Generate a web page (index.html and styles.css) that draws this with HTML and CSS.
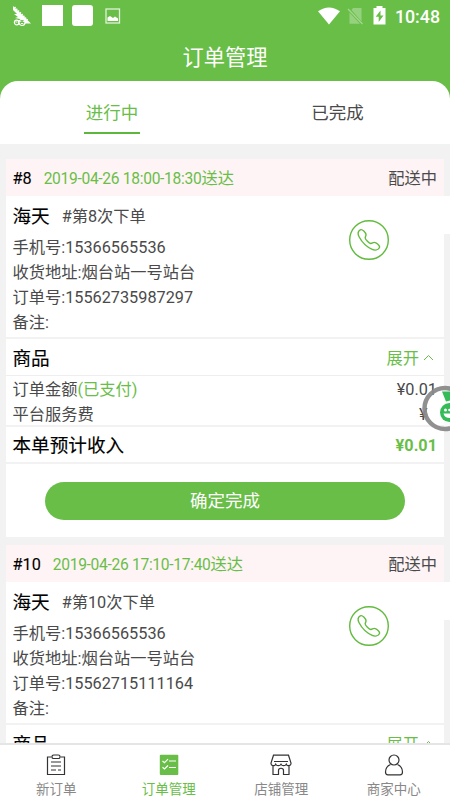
FILE: index.html
```html
<!DOCTYPE html>
<html lang="zh-CN">
<head>
<meta charset="utf-8">
<title>订单管理</title>
<link rel="stylesheet" href="styles.css">
</head>
<body>
<div class="app">
  <header class="top">
    <div class="status">
      <div class="status-left">
        <svg class="bird" width="20" height="22" viewBox="0 0 20 22"><path d="M1 1L19 18.500H12L8 14L3 13L6 12L2 9L5 9L1 5Z" fill="#fff"/><path d="M2.500 2l13 13" stroke="#fff" stroke-width="1.500" stroke-dasharray="1.500 1"/><circle cx="4.700" cy="17.500" r="2.300" fill="#69be48" stroke="#fff" stroke-width="1.200"/><circle cx="10" cy="17.500" r="3" fill="#69be48" stroke="#fff" stroke-width="1.200"/><path d="M3.500 17h2M8.300 16.500h1M10.800 16.500h1M8.800 18.500h2.500" stroke="#fff"/></svg>
        <i class="sq"></i><i class="sq round"></i>
        <svg class="pic" width="16" height="16" viewBox="0 0 16 16"><rect x="1" y="1" width="13.500" height="14" fill="none" stroke="#dff2d8" stroke-width="1.300"/><path d="M2.500 13V9.500L5 8l3 2 2-1.500 3 2V13z" fill="#fff"/></svg>
      </div>
      <div class="status-right">
        <svg width="22" height="18" viewBox="0 0 22 18"><path d="M0 4.200Q11-3.400 22 4.200L11 17.500Z" fill="#fff"/></svg>
        <svg class="sim" width="17" height="18" viewBox="0 0 17 18"><path d="M6 1h8.500v13.500L4.500 3zM2.500 5.500L13 16.800H2.500z" fill="#96d17f"/><path d="M1 2l14.500 15" stroke="#a5d892" stroke-width="1.200"/></svg>
        <svg class="bat" width="13" height="19" viewBox="0 0 13 19"><path d="M3.500 0h6v2H12.500v16.500H.5V2h3z" fill="#fff"/><path d="M7.500 4.500L2.700 10.700h3V16l4.800-6.400h-3z" fill="#69be48"/></svg>
        <span class="clock">10:48</span>
      </div>
    </div>
    <h1>订单管理</h1>
  </header>
  <nav class="tabs">
    <div class="tab on"><span>进行中</span></div>
    <div class="tab"><span>已完成</span></div>
  </nav>
  <main class="list">
    <section class="card">
      <div class="head"><b class="no">#8</b><span class="time">2019-04-26 18:00-18:30<em>送达</em></span><span class="state">配送中</span></div>
      <div class="info">
        <div class="who"><b>海天</b><span>#第8次下单</span></div>
        <p>手机号:15366565536</p><p>收货地址:烟台站一号站台</p><p>订单号:15562735987297</p><p>备注:</p>
        <svg class="call" width="42" height="42" viewBox="0 0 42 42"><circle cx="21" cy="21" r="19.300"/><path d="M12.200 10.900C10 12.200 9.700 15.200 11.200 18c3 5.600 7.500 10 13 12.300 2.800 1.200 6 .7 7.200-1.600 1-1.900-3.300-5.300-5.200-5.300-1.500 0-2 1.200-3.500 1.100-1.700-.3-5.200-3.700-5.500-5.500-.2-1.500 1-1.900.8-3.400C17.800 13.600 14.300 9.500 12.200 10.900Z"/></svg>
      </div>
      <div class="goods"><b>商品</b><span>展开<svg class="chev" width="11" height="7" viewBox="0 0 11 7"><path d="M1 6l4.500-4.500L10 6"/></svg></span></div>
      <div class="fees">
        <div class="fee"><span>订单金额<em>(已支付)</em></span><span>¥0.01</span></div>
        <div class="fee"><span>平台服务费</span><span class="blank">¥</span></div>
      </div>
      <div class="income"><b>本单预计收入</b><strong>¥0.01</strong></div>
      <div class="action"><button>确定完成</button></div>
    </section>
    <section class="card">
      <div class="head"><b class="no">#10</b><span class="time">2019-04-26 17:10-17:40<em>送达</em></span><span class="state">配送中</span></div>
      <div class="info">
        <div class="who"><b>海天</b><span>#第10次下单</span></div>
        <p>手机号:15366565536</p><p>收货地址:烟台站一号站台</p><p>订单号:15562715111164</p><p>备注:</p>
        <svg class="call" width="42" height="42" viewBox="0 0 42 42"><circle cx="21" cy="21" r="19.300"/><path d="M12.200 10.900C10 12.200 9.700 15.200 11.200 18c3 5.600 7.500 10 13 12.300 2.800 1.200 6 .7 7.200-1.600 1-1.900-3.300-5.300-5.200-5.300-1.500 0-2 1.200-3.500 1.100-1.700-.3-5.200-3.700-5.500-5.500-.2-1.500 1-1.900.8-3.400C17.800 13.600 14.300 9.500 12.200 10.900Z"/></svg>
      </div>
      <div class="goods"><b>商品</b><span>展开<svg class="chev" width="11" height="7" viewBox="0 0 11 7"><path d="M1 6l4.500-4.500L10 6"/></svg></span></div>
    </section>
  </main>
  <footer class="bar">
    <div class="item"><svg width="22" height="22" viewBox="0 0 22 22"><path d="M6.500 3H2.500v17.500h17V3h-4"/><rect x="7" y="1" width="8" height="3.500" rx="1.600"/><path d="M6 8h10M6 12h10M6 16h5M13 16h3"/></svg><span>新订单</span></div>
    <div class="item on"><svg width="22" height="22" viewBox="0 0 22 22"><rect class="fill" x="1.800" y=".8" width="18.500" height="20.200" rx="1"/><path class="light" d="M4.500 7l2 1.700L10 5.200M11 7h7M4.500 13.300l2 1.700 3.500-3.500M11 13.500h7"/></svg><span>订单管理</span></div>
    <div class="item"><svg width="24" height="22" viewBox="0 0 24 22"><path d="M4.500 1.200h15L22 9c.3 3-3.500 3.600-4.700 1.200-1 2-4.200 2-5.300 0-1.100 2-4.300 2-5.300 0C5.500 12.600 1.700 12 2 9zM5 7.500h14M4 12v8.500h5.500v-4c0-3 5-3 5 0v4H20V12"/></svg><span>店铺管理</span></div>
    <div class="item"><svg width="22" height="22" viewBox="0 0 22 22"><circle cx="11" cy="6" r="5"/><path d="M7.500 10.500C4 12 2.500 14.500 2.500 18c0 1.800.7 2.800 2.500 2.800h12c1.800 0 2.500-1 2.500-2.800 0-3.500-1.500-6-5-7.500"/></svg><span>商家中心</span></div>
  </footer>
  <svg class="float" width="30" height="48" viewBox="0 0 30 48"><path d="M24 5h6v38h-6z" fill="#fff" fill-opacity=".6"/><circle cx="25" cy="24.500" r="20.500" fill="none" stroke="#8a8a8a" stroke-opacity=".95" stroke-width="4.500"/><path d="M22 7.500h8V16.500l-4 1z" fill="#35bb58"/><circle cx="29.500" cy="28.500" r="9.500" fill="#35bb58"/><circle cx="25.500" cy="26" r="1.500" fill="#fff"/><circle cx="29.500" cy="26" r="1.300" fill="#fff"/><path d="M23.500 29.500h6.500v4.500c-3.500 0-6-1.500-6.500-4.500z" fill="#fff"/></svg>
</div>
</body>
</html>
```
FILE: styles.css
```css
* { box-sizing: border-box; }
body { margin: 0; font-family: Roboto, "Noto Sans CJK SC", sans-serif; font-size: 16.25px; color: #4a4a4a; background: #69be48; }
p, h1 { margin: 0; }
em, i { font-style: normal; }
.app { position: relative; display: flex; flex-direction: column; width: 450px; height: 800px; overflow: hidden; }
.top { flex: none; height: 81px; color: #fff; }
.status { display: flex; justify-content: space-between; height: 32px; padding: 5px 10px 0 12px; }
.status-left, .status-right { display: flex; }
.sq { width: 21px; height: 21px; margin-left: 10px; background: #fff; }
.sq.round { margin-left: 9px; border-radius: 3px; }
.pic { margin: 3px 0 0 12px; }
.status-right svg { margin-top: 2px; }
.status-right .sim { margin-left: 7px; }
.status-right .bat { margin: 1px 9px 0 9px; }
.clock { font-size: 17.8px; font-weight: 500; line-height: 23px; }
h1 { font-size: 21.25px; font-weight: 400; line-height: 51px; text-align: center; }
.tabs { flex: none; display: flex; height: 63px; background: #fff; border-radius: 18px 18px 0 0; }
.tab { flex: 1; display: flex; justify-content: center; font-size: 17.5px; }
.tab span { width: 56px; height: 53px; line-height: 65px; text-align: center; white-space: nowrap; }
.tab.on span { margin-right: 1px; color: #69be48; border-bottom: 2px solid #5cb83a; }
.list { flex: 1; min-height: 0; overflow: hidden; background: #f2f2f2; padding: 15px 6px 0; }
.card { height: 378px; margin-bottom: 8px; background: #fff; }
.head { display: flex; height: 37px; padding: 0 7px 0 6.500px; line-height: 40px; background: #fff4f5; }
.no { font-weight: 400; color: #000; -webkit-text-stroke: .1px #000; }
.time { margin-left: 12px; font-size: 15.600px; letter-spacing: -.31px; color: #69be48; }
.time em { font-size: 16.25px; letter-spacing: 0; }
.state { margin-left: auto; }
.info { position: relative; height: 141px; }
.who { display: flex; align-items: center; height: 38px; margin-right: -6px; padding: 0 6.500px 1px; background: #fff; }
.who b, .goods b, .income b { font-size: 18.600px; font-weight: 400; color: #000; -webkit-text-stroke: .15px #000; }
.who span { margin-left: 12px; }
.info p { height: 25.100px; padding-left: 6.500px; line-height: 27px; }
.call { position: absolute; left: 342px; top: 23px; fill: none; stroke: #62bb3f; stroke-width: 1.400; }
.goods { display: flex; justify-content: space-between; align-items: center; height: 38px; padding: 0 10px 2px 6.500px; border-top: 2px solid #f2f2f2; }
.goods span { padding-top: 2px; color: #69be48; }
.chev { margin: 0 0 3px 4px; fill: none; stroke: #69be48; }
.fees { height: 50px; border-top: 1px solid #eee; }
.fee { display: flex; justify-content: space-between; height: 24.500px; padding: 0 7px 0 6.500px; line-height: 27px; }
.fee em, .income strong { color: #69be48; }
.blank { margin-right: 9.500px; }
.income { display: flex; justify-content: space-between; align-items: center; height: 39px; padding: 0 7px 2px 6.500px; border: solid #f2f2f2; border-width: 2px 0; }
.income strong { padding-top: 3px; }
.action { padding: 18px 39px 0; }
button { display: block; width: 360px; height: 37.500px; padding: 2px 0 0; border: 0; border-radius: 19px; background: #69be48; color: #fff; font: 17.5px/35.500px Roboto, "Noto Sans CJK SC", sans-serif; }
.bar { flex: none; display: flex; height: 57px; background: #fff; border-top: 2px solid #e5e5e5; }
.item { flex: 1; display: flex; flex-direction: column; align-items: center; padding-top: 9px; font-size: 13.5px; color: #888; }
.item svg { fill: none; stroke: #333; stroke-width: 1.200; }
.item span { line-height: 20px; margin-top: 3px; }
.item.on { color: #69be48; }
.item .fill { fill: #69be48; stroke: none; }
.item .light { stroke: #fff; }
.float { position: absolute; right: 0; top: 384px; }
```
